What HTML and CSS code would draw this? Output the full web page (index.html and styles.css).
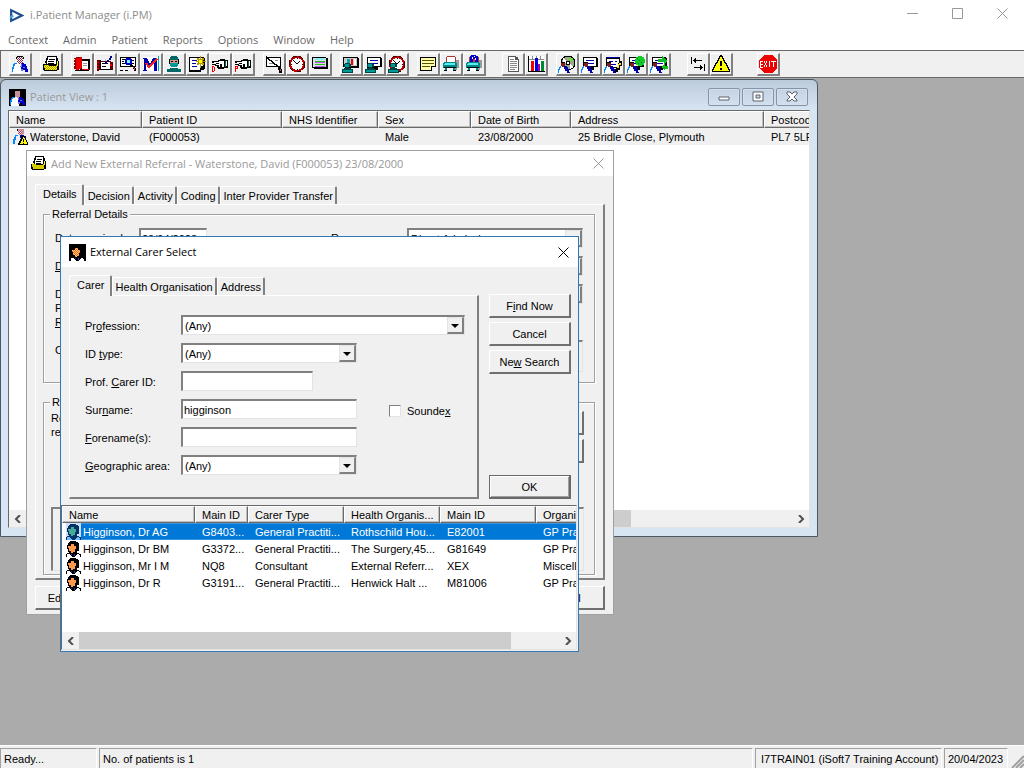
FILE: index.html
```html
<!DOCTYPE html>
<html lang="en">
<head>
    <meta charset="UTF-8" />
    <meta name="viewport" content="width=device-width, initial-scale=1.0" />
    <title>i.Patient Manager (i.PM)</title>
    <link rel="stylesheet" href="styles.css">
</head>
<body>
    <!-- Icon sheet -->
    <svg class="icon-sheet" aria-hidden="true">
        <defs>
            <pattern id="skin" width="2" height="2" patternUnits="userSpaceOnUse"><path fill="#f60" d="M0 0h2v2H0z"/><path fill="#fc9" d="M0 0h1v1H0zM1 1h1v1H1z"/></pattern>
            <pattern id="blush" width="2" height="2" patternUnits="userSpaceOnUse"><path fill="#fff" d="M0 0h2v2H0z"/><path fill="#902040" d="M0 0h1v1H0zM1 1h1v1H1z"/></pattern>
            <pattern id="gold" width="2" height="2" patternUnits="userSpaceOnUse"><path fill="#ff0" d="M0 0h2v2H0z"/><path fill="#a90" d="M0 0h1v1H0zM1 1h1v1H1z"/></pattern>
        </defs>
        <symbol id="patient" viewBox="0 0 18 18">
            <path fill="#000" d="M6 1h6v1h1v2H5V2h1z"/>
            <path fill="url(#blush)" d="M6 2h6v6h-1v1H7V8H6z"/>
            <path fill="#fff" d="M4 8h4l2 4 1 6H2v-7z"/>
            <path fill="#08f" d="M3 8h3v1H4v2H3v3H2v3H1v-5h1V9h1z"/>
            <path fill="#00c" d="M11 8h2v1h2v2h1v3h1v3h-3v-2h-2v-1h-2v-2h1z"/>
            <path fill="#77d" d="M10 9h1v3H9v-1h1zM12 12h2v1h-2zM10 14h2v2h-2z"/>
        </symbol>
        <symbol id="patient-small" viewBox="0 0 18 18">
            <path fill="#000" d="M7 0h6v1h1v2H6V1h1z"/>
            <path fill="url(#blush)" d="M7 1h6v5h-1v1H8V6H7z"/>
            <path fill="#08f" d="M4 7h3v1H5v2H4v3H3v4H1v-5h1V9h1z"/>
            <path fill="#008" d="M9 7h5v1h2v3H9z"/>
            <path fill="#000" d="M12 8h2l4 9v1H7v-1z"/>
            <path fill="#ff0" d="M13 9l4 8H9z"/><path fill="#000" d="M12 12h2v3h-2zM12 16h2v1h-2z"/>
        </symbol>
        <symbol id="folder" viewBox="0 0 18 18">
            <path fill="#000" d="M5 1h10v2h1v3h1v9h-2v1H2v-1H1V9h2V6h1V3h1z"/>
            <path fill="#fff" d="M6 2h8v7H5V5h1z"/>
            <path fill="#000" d="M7 4h6v1H7zM6 6h6v1H6zM6 8h6v1H6z"/>
            <path fill="url(#gold)" d="M2 10h4l1 1h7v-1h1v5H3v-2H2z"/>
            <path fill="#ff0" d="M15 6h1v5h-1zM3 8h1v1H3z"/>
        </symbol>
        <symbol id="redbook" viewBox="0 0 18 18">
            <path fill="#000" d="M7 4h10v11h-1v1H2v-1h5z"/>
            <path fill="#fff" d="M9 6h6v8H9z"/><path fill="#999" d="M10 8h4v1h-4zM10 10h4v1h-4z"/>
            <path fill="#800" d="M1 3h2V2h5v11H3v1H1z"/><path fill="#e00" d="M3 3h4V2h2v11l-4 2H3z"/>
            <path fill="#fff" d="M1 4h1v1H1zM1 7h1v1H1zM1 10h1v1H1z"/><path fill="#e00" d="M9 14h7v1H9z"/>
        </symbol>
        <symbol id="notebook-pen" viewBox="0 0 18 18">
            <path fill="#600" d="M1 5h3v1h11v1h2v8H3v1H1z"/><path fill="#fff" d="M4 7h10v7H4z"/>
            <path fill="#000" d="M4 5h1v10H4zM6 8h6v1H6zM6 11h4v1H6zM4 14h12v1H4z"/>
            <path fill="#e00" d="M1 7h2v1H1zM1 10h2v1H1zM1 13h2v1H1zM14 9h2v2h-2z"/>
            <path fill="#008" d="M14 1h2v2h-1v2h-2v2h-2v2H9V7h2V5h2V3h1z"/><path fill="#8cf" d="M9 4h1v2H9z"/>
        </symbol>
        <symbol id="card-find" viewBox="0 0 18 18">
            <path fill="#000" d="M1 2h16v10H1z"/><path fill="#fff" d="M2 3h14v8H2z"/>
            <path fill="#000" d="M3 4h3v1H3zM3 6h2v1H3zM3 8h3v1H3zM13 5h2v1h-2zM13 8h2v1h-2zM1 15h3v1H1zM6 15h3v1H6z"/>
            <path fill="#00c" d="M7 3h5v1h1v5h-1v1H7V9H6V4h1z"/><path fill="#6ff" d="M8 5h3v3H8z"/>
            <path fill="#000" d="M11 9h2v1h1v1h1v1h1v1h1v3h-2v-2h-1v-2h-1v-1h-2z"/><path fill="#d44" d="M14 12h1v1h1v2h-1v-2h-1z"/>
        </symbol>
        <symbol id="marker" viewBox="0 0 18 18">
            <path fill="#fff" d="M1 2h15v14H1z"/><path fill="#0aa" d="M16 1h1v15h-1z"/>
            <path fill="#00a" d="M1 3h4v1h1v2h1v2h2V6h1V4h1V3h4v13h-3V8l-3 4H7L4 8v7h1v1H1v-1h1V4H1z"/>
            <path fill="none" stroke="#e22" stroke-width="2" d="M4 8l3 4 8-8"/>
        </symbol>
        <symbol id="surgeon" viewBox="0 0 18 18">
            <path fill="#066" d="M6 1h6v1h1v3H5V2h1z"/><path fill="#c98" d="M5 5h8v3H5z"/>
            <path fill="#000" d="M6 6h2v1H6zM10 6h2v1h-2zM4 4h1v5H4zM13 4h1v5h-1z"/>
            <path fill="#099" d="M5 8h8v3h-1v1H6v-1H5z"/><path fill="#066" d="M2 14h3v-1h8v1h3v3H2z"/><path fill="#fff" d="M7 12h4v1H7z"/>
        </symbol>
        <symbol id="new-note" viewBox="0 0 18 18">
            <path fill="#000" d="M1 2h15v1h1v11h-1v1h-3v2H1z"/><path fill="#fff" d="M2 3h13v8h-3v4H2z"/>
            <path fill="#00a" d="M4 5h5v1H4zM4 8h4v1H4zM4 11h5v1H4z"/>
            <path fill="#b90" d="M12 1h1v3h1V3h2v2h-1v1h3v1h-3v1h1v2h-2V9h-1v4h-1V9h-1v1H9V8h1V7H8V6h2V5H9V3h2v1h1z"/><path fill="#ff0" d="M11 5h3v3h-3z"/>
        </symbol>
        <symbol id="hand" viewBox="0 0 18 18">
            <path fill="#000" d="M1 6h6V5h2V4h5v1h3v8h-4v1H7v-1H6v-2H4v-1H1V9h4V8H1z"/>
            <path fill="#fff" d="M3 7h5V6h5v6h-2V9H9v3H8v-2H5V9h3V8H3z"/><path fill="#066" d="M14 6h1v6h-1z"/><path fill="#fff" d="M15 6h1v5h-1z"/>
        </symbol>
        <symbol id="hand-d" viewBox="0 0 18 18"><use href="#hand"/><path fill="#e00" d="M1 11h2v1h1v4H3v1H1zM2 12v4h1v-4z" fill-rule="evenodd"/></symbol>
        <symbol id="hand-p" viewBox="0 0 18 18"><use href="#hand"/><path fill="#e00" d="M1 11h3v3H2v3H1zM2 12v1h1v-1z" fill-rule="evenodd"/></symbol>
        <symbol id="no-letter" viewBox="0 0 18 18">
            <path fill="#000" d="M1 2h15v10H1z"/><path fill="#fff" d="M2 3h13v8H2z"/><path fill="#888" d="M4 5h2v1H4zM4 8h4v1H4zM10 5h3v1h-3z"/>
            <path fill="none" stroke="#000" stroke-width="1.500" d="M1 2l14 11"/><path fill="#000" d="M13 12h3v2h1v4h-3v-3h-1z"/><path fill="#c44" d="M15 14h1v2h-1z"/>
        </symbol>
        <symbol id="clock" viewBox="0 0 18 18">
            <circle cx="9" cy="9" r="7" fill="#fff" stroke="#b00" stroke-width="2"/><circle cx="9" cy="9" r="8" fill="none" stroke="#400" stroke-width="1" stroke-dasharray="5 3"/>
            <path fill="none" stroke="#000" d="M5 5l4 4 3-3"/><path fill="#000" d="M9 3h1v1H9zM9 14h1v1H9zM3 9h1v1H3zM14 9h1v1h-1z"/>
        </symbol>
        <symbol id="listing" viewBox="0 0 18 18">
            <path fill="#000" d="M1 2h14v1h2v11H3v-1H1z"/><path fill="#ddd" d="M2 3h13v9H2z"/><path fill="#8ee" d="M4 3h10v2H4z"/><path fill="#2b2" d="M4 6h10v1H4zM4 9h10v1H4z"/><path fill="#b5f" d="M4 7h10v1H4zM4 11h10v1H4z"/>
        </symbol>
        <symbol id="nurse" viewBox="0 0 18 18">
            <path fill="#044" d="M3 8h5v1h1v3H7v1h2v1h2v4H0v-4h2v-1h2v-1H2V9h1z"/><path fill="#099" d="M3 9h4v3H3zM1 15h9v2H1z"/>
        </symbol>
        <symbol id="nurse-chart" viewBox="0 0 18 18">
            <path fill="#000" d="M1 2h15v1h1v10H3v-1H1z"/><path fill="#ccc" d="M2 3h13v8H2z"/><path fill="#0aa" d="M5 4h3v6H5z"/><path fill="#e00" d="M9 4h2v6H9z"/><path fill="#fff" d="M12 4h2v6h-2z"/><use href="#nurse"/>
        </symbol>
        <symbol id="card" viewBox="0 0 18 18">
            <path fill="#000" d="M2 2h14v1h1v9h-4v3H2z"/><path fill="#fff" d="M3 3h12v8H3z"/><path fill="#00a" d="M5 5h8v1H5zM5 8h8v1H5z"/>
        </symbol>
        <symbol id="nurse-card" viewBox="0 0 18 18"><use href="#card"/><use href="#nurse"/></symbol>
        <symbol id="nurse-clock" viewBox="0 0 18 18"><use href="#clock"/><use href="#nurse"/></symbol>
        <symbol id="sticky" viewBox="0 0 18 18">
            <path fill="#000" d="M1 2h16v10h-4v4H1z"/><path fill="#ffa" d="M2 3h14v8h-4v4H2z"/><path fill="#550" d="M3 5h12v1H3zM3 8h12v1H3zM3 11h8v1H3z"/>
        </symbol>
        <symbol id="printer" viewBox="0 0 18 18">
            <path fill="#999" d="M10 5h7v8h-2v2h-4z"/><path fill="#fff" d="M5 2h8v5H4V4h1z"/><path fill="#a33" d="M5 1h8v1H5zM4 2h1v5H4zM13 2h1v5h-1z"/>
            <path fill="#088" d="M2 7h12v1h1v5h-2v3h-2v-3H5v3H3v-3H1V8h1z"/><path fill="#5ee" d="M3 8h10v2H2V9h1z"/><path fill="#fff" d="M5 13h6v3H5z"/><path fill="#000" d="M2 12h12v1H2zM2 15h3v1H2zM11 15h3v1h-3z"/>
        </symbol>
        <symbol id="print-all" viewBox="0 0 18 18"><use href="#printer"/><path fill="#00c" d="M6 0h5v1h2v6H5V1h1z"/><path fill="#fff" d="M7 2h1v2H7zM9 1h1v1H9zM10 3h1v2h-1z"/><path fill="#c33" d="M8 4h2v3H8z"/></symbol>
        <symbol id="page" viewBox="0 0 18 18">
            <path fill="#555" d="M4 1h8v1h2v2h1v13H4z"/><path fill="#fff" d="M5 2h6v3h3v11H5z"/><path fill="#888" d="M6 4h4v1H6zM6 6h7v1H6zM6 8h7v1H6zM6 10h7v1H6zM6 12h7v1H6zM6 14h5v1H6z"/>
        </symbol>
        <symbol id="chart" viewBox="0 0 18 18">
            <path fill="#fff" d="M2 1h15v15H2z"/><path fill="#888" d="M5 1h1v4H5zM9 1h1v3H9zM13 1h1v3h-1zM2 4h15v1H2z"/><path fill="#000" d="M1 1h1v15h16v1H1z"/>
            <path fill="#e00" d="M4 6h3v10H4z"/><path fill="#00d" d="M8 3h3v13H8z"/><path fill="#a0a" d="M11 9h2v7h-2z"/><path fill="#083" d="M14 6h3v10h-3z"/>
        </symbol>
        <symbol id="doc" viewBox="0 0 18 18">
            <path fill="#fff" d="M2 11h5v7H1v-4h1z"/><path fill="#08f" d="M2 11h1v2H2v2H1v3H0v-4h1v-2h1z"/><path fill="#00a" d="M6 11h3v1h1v2h1v3h1v1H9v-2H7v-2H6z"/><path fill="#802020" d="M3 8h4v3H6v1H4v-1H3z"/><path fill="#000" d="M3 7h4v1H3z"/>
        </symbol>
        <symbol id="doc-cd" viewBox="0 0 18 18">
            <circle cx="10" cy="8" r="7" fill="#9a8" stroke="#000"/><path fill="#fff" d="M5 3l4 4-4 3zM12 9l4 3-4 2z"/><path fill="#6d3" d="M11 3h4v3h-3z"/><circle cx="10" cy="8" r="2" fill="#fff" stroke="#000"/><use href="#doc"/>
        </symbol>
        <symbol id="doc-card" viewBox="0 0 18 18"><use href="#card"/><use href="#doc"/></symbol>
        <symbol id="doc-edit" viewBox="0 0 18 18">
            <path fill="#000" d="M2 2h14v11H2z"/><path fill="#fff" d="M3 4h12v8H3z"/><path fill="#00a" d="M3 2h12v1H3zM5 6h4v1H5zM11 6h2v1h-2zM5 9h7v1H5z"/>
            <path fill="#000" d="M15 6h3v5h-2v4h-2v2h-3v-3h1v-2h2V8h1z"/><path fill="#fd3" d="M15 8h2v2h-2v3h-2v-2h1V9h1z"/><use href="#doc"/>
        </symbol>
        <symbol id="doc-globe" viewBox="0 0 18 18"><use href="#card"/><circle cx="13" cy="6" r="5" fill="#1c2"/><path fill="#063" d="M10 3h1v1h-1zM12 5h1v1h-1zM14 7h1v1h-1zM11 8h1v1h-1z"/><use href="#doc"/></symbol>
        <symbol id="doc-swap" viewBox="0 0 18 18"><use href="#card"/><path fill="#1b2" d="M8 4h4V1l6 5-4 3V7H8zM18 11v3h-3v2l-4-4 4-3v2z"/><use href="#doc"/></symbol>
        <symbol id="arrows" viewBox="0 0 18 18">
            <path fill="#000" d="M2 2h1v7H2zM4 5h1V4h1V3h1v2h6v1H7v2H6V7H5V6H4zM15 9h1v7h-1zM14 12h-1v-1h-1v-1h-1v2H5v1h6v2h1v-1h1v-1h1z"/>
        </symbol>
        <symbol id="warning" viewBox="0 0 18 18">
            <path fill="#000" d="M8 0h2l8 15v2H0v-2z"/><path fill="#ff0" d="M9 1l8 15H1z"/><path fill="#000" d="M8 6h2v5H8zM8 13h2v2H8z"/>
        </symbol>
        <symbol id="exit" viewBox="0 0 18 18">
            <path fill="#e00" d="M5 0h8l5 5v8l-5 5H5l-5-5V5z"/>
            <path fill="none" stroke="#fff" d="M4 6H1.500v6H4M2 9h2M5 6l3 6M8 6l-3 6M10.500 6v6M12 6.500h5M14.500 6v6"/>
        </symbol>
        <symbol id="carer" viewBox="0 0 15 17">
            <path fill="#000" d="M4 1h6v1h2v1h1v8h-2v2h2v1h2v3H0v-3h1v-1h2v-1H2V9H1V5h1V3h1V2h1z"/>
            <path fill="url(#skin)" d="M5 4h3v2h2v3H9v3H7v1H5v-2H3V8H2V6h3z"/>
            <path fill="#fff" d="M1 14h3v1h1v1h1v1H1zM11 14h2v1h1v2H9v-1h1v-1h1z"/><path fill="#33c" d="M5 14h1v1H5zM8 14h1v2H8z"/>
        </symbol>
        <symbol id="carer-on" viewBox="0 0 15 17">
            <path fill="#cdf" d="M0 0h15v17H0z"/>
            <path fill="#036" d="M4 1h6v1h2v1h1v8h-2v2h2v1h2v3H0v-3h1v-1h2v-1H2V9H1V5h1V3h1V2h1z"/>
            <path fill="#4a9" d="M5 4h3v2h2v3H9v3H7v1H5v-2H3V8H2V6h3z"/>
            <path fill="#7bf" d="M1 14h3v1h1v1h1v1H1zM11 14h2v1h1v2H9v-1h1v-1h1z"/>
        </symbol>
    </svg>

    <header class="app-title">
        <svg class="app-logo" viewBox="0 0 14 14"><path d="M2 2v10l10-5z" fill="none" stroke="#1c4f8c" stroke-width="2"/><path d="M1 9l3-2" stroke="#4aa3dc" stroke-width="2"/></svg>
        <h1>i.Patient Manager (i.PM)</h1>
        <button class="caption" aria-label="Minimise"><svg viewBox="0 0 11 11"><path d="M0 5.500h11"/></svg></button>
        <button class="caption" aria-label="Maximise"><svg viewBox="0 0 11 11"><path d="M.5.5h10v10H.5z"/></svg></button>
        <button class="caption" aria-label="Close"><svg viewBox="0 0 11 11"><path d="M.5.5l10 10M10.500.5l-10 10"/></svg></button>
    </header>

    <nav class="menu">
        <a href="#">Context</a><a href="#">Admin</a><a href="#">Patient</a><a href="#">Reports</a><a href="#">Options</a><a href="#">Window</a><a href="#">Help</a>
    </nav>

    <div class="toolbar">
        <div class="tools"><button aria-label="Patient"><svg><use href="#patient"/></svg></button></div>
        <div class="tools"><button aria-label="Referral"><svg><use href="#folder"/></svg></button></div>
        <div class="tools">
            <button aria-label="Case notes"><svg><use href="#redbook"/></svg></button>
            <button aria-label="Edit notes"><svg><use href="#notebook-pen"/></svg></button>
            <button aria-label="Find card"><svg><use href="#card-find"/></svg></button>
            <button aria-label="Marker"><svg><use href="#marker"/></svg></button>
            <button aria-label="Theatre"><svg><use href="#surgeon"/></svg></button>
            <button aria-label="New note"><svg><use href="#new-note"/></svg></button>
            <button aria-label="Discharge"><svg><use href="#hand-d"/></svg></button>
            <button aria-label="Pre-admit"><svg><use href="#hand-p"/></svg></button>
        </div>
        <div class="tools">
            <button aria-label="Remove letter"><svg><use href="#no-letter"/></svg></button>
            <button aria-label="Clock"><svg><use href="#clock"/></svg></button>
            <button aria-label="Listing"><svg><use href="#listing"/></svg></button>
        </div>
        <div class="tools">
            <button aria-label="Clinic chart"><svg><use href="#nurse-chart"/></svg></button>
            <button aria-label="Clinic card"><svg><use href="#nurse-card"/></svg></button>
            <button aria-label="Clinic time"><svg><use href="#nurse-clock"/></svg></button>
        </div>
        <div class="tools">
            <button aria-label="Note"><svg><use href="#sticky"/></svg></button>
            <button aria-label="Print"><svg><use href="#printer"/></svg></button>
            <button aria-label="Print all"><svg><use href="#print-all"/></svg></button>
        </div>
        <div class="tools wide">
            <button aria-label="Document"><svg><use href="#page"/></svg></button>
            <button aria-label="Chart"><svg><use href="#chart"/></svg></button>
        </div>
        <div class="tools">
            <button aria-label="Disc"><svg><use href="#doc-cd"/></svg></button>
            <button aria-label="Patient card"><svg><use href="#doc-card"/></svg></button>
            <button aria-label="Edit card"><svg><use href="#doc-edit"/></svg></button>
            <button aria-label="Globe"><svg><use href="#doc-globe"/></svg></button>
            <button aria-label="Transfer"><svg><use href="#doc-swap"/></svg></button>
        </div>
        <div class="tools wide">
            <button aria-label="Switch"><svg><use href="#arrows"/></svg></button>
            <button aria-label="Alert"><svg><use href="#warning"/></svg></button>
        </div>
        <div class="tools widest"><button aria-label="Exit"><svg><use href="#exit"/></svg></button></div>
    </div>

    <main class="desktop">
        <!-- Patient View -->
        <section class="window patient-view">
            <header class="glass-title">
                <svg class="title-icon dark"><use href="#patient"/></svg>
                <h2>Patient View : 1</h2>
                <button aria-label="Minimise"><svg viewBox="0 0 14 12"><path d="M2 6h10v3H2z"/></svg></button>
                <button aria-label="Restore"><svg viewBox="0 0 14 12"><path d="M2 1h10v9H2zM5 4v3h4V4z" fill-rule="evenodd"/></svg></button>
                <button aria-label="Close"><svg viewBox="0 0 14 12"><path d="M2 1h3l2 2 2-2h3v2L9 6l3 3v1H9L7 8l-2 2H2V9l3-3-3-3z"/></svg></button>
            </header>
            <div class="list">
                <div class="list-rows">
                    <table>
                        <colgroup><col class="c-icon"><col class="p-name"><col class="p-id"><col class="p-nhs"><col class="p-sex"><col class="p-dob"><col class="p-address"><col class="p-post"></colgroup>
                        <thead>
                            <tr><th colspan="2">Name</th><th>Patient ID</th><th>NHS Identifier</th><th>Sex</th><th>Date of Birth</th><th>Address</th><th>Postcode</th></tr>
                        </thead>
                        <tbody>
                            <tr class="shaded"><td class="icon-cell"><svg><use href="#patient-small"/></svg></td><td class="first">Waterstone, David</td><td>(F000053)</td><td></td><td>Male</td><td>23/08/2000</td><td>25 Bridle Close, Plymouth</td><td>PL7 5LR</td></tr>
                        </tbody>
                    </table>
                </div>
                <div class="scrollbar">
                    <button aria-label="Scroll left"><svg viewBox="0 0 8 8"><path d="M6 0L2 4l4 4"/></svg></button>
                    <div class="track"><div class="thumb patient-thumb"></div></div>
                    <button aria-label="Scroll right"><svg viewBox="0 0 8 8"><path d="M2 0l4 4-4 4"/></svg></button>
                </div>
            </div>
        </section>

        <!-- Referral dialog -->
        <section class="window referral">
            <header class="dialog-title">
                <svg class="title-icon"><use href="#folder"/></svg>
                <h2>Add New External Referral - Waterstone, David (F000053) 23/08/2000</h2>
                <button aria-label="Close"><svg viewBox="0 0 11 11"><path d="M.5.5l10 10M10.500.5l-10 10"/></svg></button>
            </header>
            <div class="referral-body">
                <div class="tabs"><button class="selected">Details</button><button>Decision</button><button>Activity</button><button>Coding</button><button>Inter Provider Transfer</button></div>
                <div class="panel referral-panel">
                    <fieldset class="details">
                        <legend>Referral Details</legend>
                        <label for="received">Date received:</label>
                        <input id="received" type="text" value="20/04/2023">
                        <label for="reason">Reason:</label>
                        <span class="select"><select id="reason"><option>Direct Admission</option></select><i class="arrow"></i></span>
                        <label for="decided"><u>D</u>ate:</label>
                        <input id="decided" type="text">
                        <label for="source">Source:</label>
                        <span class="select"><select id="source"><option></option></select><i class="arrow"></i></span>
                        <label for="priority">Date<br>Priority:</label>
                        <input id="priority" type="text">
                        <label for="urgency">Urgency:</label>
                        <span class="select"><select id="urgency"><option></option></select><i class="arrow"></i></span>
                        <label for="reference" class="ref-label"><u>R</u>ef:</label>
                        <input id="reference" type="text">
                        <label for="comment" class="comment-label">Comment:</label>
                        <textarea id="comment" readonly></textarea>
                    </fieldset>
                    <fieldset class="referrer">
                        <legend>Referrer</legend>
                        <p>Record<br>referrer</p>
                        <div class="side-buttons"><button class="btn">Find</button><button class="btn">Clear</button></div>
                        <div class="blank-list"></div>
                    </fieldset>
                </div>
                <footer><button class="btn">Edit Details</button><button class="btn cancel">Cancel</button></footer>
            </div>
        </section>

        <!-- Carer search dialog -->
        <section class="window carer-select">
            <header class="dialog-title active">
                <svg class="title-icon dark"><use href="#carer"/></svg>
                <h2>External Carer Select</h2>
                <button aria-label="Close"><svg viewBox="0 0 11 11"><path d="M.5.5l10 10M10.500.5l-10 10"/></svg></button>
            </header>
            <form class="search">
                <div class="criteria">
                    <div class="tabs"><button type="button" class="selected">Carer</button><button type="button">Health Organisation</button><button type="button">Address</button></div>
                    <div class="panel fields">
                        <label for="profession">Pr<u>o</u>fession:</label>
                        <span class="select full"><select id="profession"><option>(Any)</option></select><i class="arrow"></i></span>
                        <label for="idtype">ID <u>t</u>ype:</label>
                        <span class="select"><select id="idtype"><option>(Any)</option></select><i class="arrow"></i></span>
                        <label for="carerid">Prof. <u>C</u>arer ID:</label>
                        <input id="carerid" class="short" type="text">
                        <label for="surname">Sur<u>n</u>ame:</label>
                        <input id="surname" type="text" value="higginson">
                        <label class="check"><input type="checkbox"><span>Sounde<u>x</u></span></label>
                        <label for="forename"><u>F</u>orename(s):</label>
                        <input id="forename" type="text">
                        <label for="area"><u>G</u>eographic area:</label>
                        <span class="select"><select id="area"><option>(Any)</option></select><i class="arrow"></i></span>
                    </div>
                </div>
                <div class="actions">
                    <button type="button" class="btn">F<u>i</u>nd Now</button>
                    <button type="button" class="btn">Cancel</button>
                    <button type="button" class="btn">Ne<u>w</u> Search</button>
                    <button type="button" class="btn default">OK</button>
                </div>
            </form>
            <div class="list">
                <div class="list-rows">
                    <table>
                        <colgroup><col class="c-icon"><col class="r-name"><col class="r-id"><col class="r-wide"><col class="r-wide"><col class="r-wide"><col class="r-wide"></colgroup>
                        <thead>
                            <tr><th colspan="2">Name</th><th>Main ID</th><th>Carer Type</th><th>Health Organis...</th><th>Main ID</th><th>Organisation</th></tr>
                        </thead>
                        <tbody>
                            <tr class="selected"><td class="icon-cell"><svg><use href="#carer-on"/></svg></td><td class="first">Higginson, Dr AG</td><td>G8403...</td><td>General Practiti...</td><td>Rothschild Hou...</td><td>E82001</td><td>GP Practice</td></tr>
                            <tr><td class="icon-cell"><svg><use href="#carer"/></svg></td><td class="first">Higginson, Dr BM</td><td>G3372...</td><td>General Practiti...</td><td>The Surgery,45...</td><td>G81649</td><td>GP Practice</td></tr>
                            <tr><td class="icon-cell"><svg><use href="#carer"/></svg></td><td class="first">Higginson, Mr I M</td><td>NQ8</td><td>Consultant</td><td>External Referr...</td><td>XEX</td><td>Miscellaneous</td></tr>
                            <tr><td class="icon-cell"><svg><use href="#carer"/></svg></td><td class="first">Higginson, Dr R</td><td>G3191...</td><td>General Practiti...</td><td>Henwick Halt ...</td><td>M81006</td><td>GP Practice</td></tr>
                        </tbody>
                    </table>
                </div>
                <div class="scrollbar">
                    <button aria-label="Scroll left"><svg viewBox="0 0 8 8"><path d="M6 0L2 4l4 4"/></svg></button>
                    <div class="track"><div class="thumb carer-thumb"></div></div>
                    <button aria-label="Scroll right"><svg viewBox="0 0 8 8"><path d="M2 0l4 4-4 4"/></svg></button>
                </div>
            </div>
        </section>
    </main>

    <footer class="status">
        <span class="state">Ready...</span>
        <span class="message">No. of patients is 1</span>
        <span class="account">I7TRAIN01 (iSoft7 Training Account)</span>
        <span class="date">20/04/2023</span>
        <svg class="grip" viewBox="0 0 14 14"><path d="M2 14L14 2M6 14l8-8M10 14l4-4" stroke="#a0a0a0" stroke-width="2"/></svg>
    </footer>
</body>
</html>
```
FILE: styles.css
```css
/* General */
* {
    box-sizing: border-box;
}

body {
    margin: 0;
    height: 100vh;
    display: flex;
    flex-direction: column;
    overflow: hidden;
    background: #fff;
    color: #000;
    font: 11px/14px "Liberation Sans", Arial, sans-serif;
}

button, input, select, textarea {
    font: inherit;
    color: inherit;
    margin: 0;
    padding: 0;
    border: 0;
    border-radius: 0;
    background: none;
}

h1, h2, p {
    margin: 0;
    font-weight: normal;
}

h1, h2, .menu {
    font: 11px/16px "Open Sans", "Noto Sans", sans-serif;
}

.icon-sheet {
    position: absolute;
    width: 0;
    height: 0;
}

symbol {
    shape-rendering: crispEdges;
}

/* Application title and menu */
.app-title {
    display: flex;
    align-items: center;
    height: 30px;
    padding-left: 9px;
    color: #8c8c8c;
}

.app-logo {
    width: 15px;
    height: 15px;
    margin-right: 6px;
}

.app-title h1 {
    flex: 1;
}

.caption {
    width: 46px;
    height: 30px;
    margin-right: -1px;
}

.caption svg, .dialog-title button svg {
    width: 11px;
    height: 11px;
    fill: none;
    stroke: #999;
}

.menu {
    display: flex;
    gap: 15px;
    height: 20px;
    padding: 2px 8px;
}

.menu a {
    color: #6a6a6a;
    text-decoration: none;
}

/* Toolbar */
.toolbar {
    display: flex;
    gap: 8px;
    height: 28px;
    padding: 2px 8px;
    background: #f0f0f0;
    border: 1px solid #696969;
    border-width: 1px 0 1px 1px;
}

.tools {
    display: flex;
}

.tools.wide {
    margin-left: 8px;
}

.tools.widest {
    margin-left: 16px;
}

.tools button {
    width: 23px;
    height: 23px;
    border: solid;
    border-width: 1px 2px 2px 1px;
    border-color: #fff #808080 #808080 #fff;
}

.tools svg {
    display: block;
    width: 18px;
    height: 18px;
    margin: 1px;
}

/* Desktop and windows */
.desktop {
    position: relative;
    flex: 1;
    overflow: hidden;
    background: #ababab;
}

.window {
    position: absolute;
    display: flex;
    flex-direction: column;
    background: #f0f0f0;
    border: 1px solid #a0a0a0;
}

.patient-view {
    left: 0;
    top: 1px;
    width: 818px;
    height: 458px;
    padding: 0 7px 8px;
    background: linear-gradient(#bccbdb, #d7e4f2 30px);
    border-color: #4d5866;
    border-radius: 6px 6px 0 0;
}

.referral {
    left: 26px;
    top: 72px;
    width: 588px;
    height: 465px;
}

.carer-select {
    left: 60px;
    top: 158px;
    width: 519px;
    height: 416px;
    border-color: #3079b4;
}

.title-icon {
    width: 17px;
    height: 17px;
    margin-right: 4px;
}

.title-icon.dark {
    background: #000;
}

.glass-title, .dialog-title {
    display: flex;
    align-items: center;
    color: #999;
}

.glass-title {
    height: 30px;
    padding: 4px 0 0 1px;
}

.glass-title h2, .dialog-title h2 {
    flex: 1;
}

.glass-title button {
    display: flex;
    align-items: center;
    justify-content: center;
    width: 32px;
    height: 18px;
    margin-right: 2px;
    border: 1px solid #8494aa;
    border-radius: 2px;
    box-shadow: inset 0 0 0 1px #d5e0ec;
}

.glass-title svg:not(.title-icon) {
    width: 14px;
    height: 12px;
    fill: #fff;
    stroke: #5a626e;
}

.dialog-title {
    height: 25px;
    padding: 0 9px 0 3px;
    background: #fff;
}

.dialog-title button {
    display: flex;
    padding: 0;
}

.dialog-title.active {
    height: 30px;
    padding-left: 8px;
    color: #000;
}

.dialog-title.active button svg {
    stroke: #000;
}

/* Tabs */
.tabs {
    display: flex;
    align-items: flex-end;
    position: relative;
}

.tabs button {
    height: 18px;
    padding: 0 2px 0 3px;
    border: solid;
    border-width: 1px 2px 0 1px;
    border-color: #fff #808080 #fff #fff;
    border-radius: 2px 2px 0 0;
}

.tabs .selected {
    height: 21px;
    margin-bottom: -1px;
    padding: 0 5px 3px 7px;
    background: #f0f0f0;
}

.panel {
    border: solid;
    border-width: 1px 2px 2px 1px;
    border-color: #fff #808080 #808080 #fff;
}

/* Inputs and buttons */
input[type="text"], .select, textarea, .blank-list {
    width: 176px;
    height: 20px;
    background: #fff;
    border: solid;
    border-width: 2px 1px 1px 2px;
    border-color: #808080 #e3e3e3 #e3e3e3 #808080;
}

input[type="text"] {
    padding-left: 1px;
}

input.short {
    width: 132px;
}

.select {
    position: relative;
    display: block;
}

.select select {
    width: 100%;
    height: 100%;
    padding-left: 2px;
    appearance: none;
}

.select.full {
    width: 284px;
    grid-column: 2 / 4;
}

.arrow {
    position: absolute;
    right: 0;
    top: 0;
    width: 17px;
    height: 17px;
    pointer-events: none;
    background: #f0f0f0;
    border: solid;
    border-width: 1px 2px 2px 1px;
    border-color: #e3e3e3 #808080 #808080 #e3e3e3;
}

.arrow::after {
    content: "";
    display: block;
    margin: 6px 0 0 3px;
    width: 0;
    border: 4px solid transparent;
    border-top-color: #000;
    border-bottom: 0;
}

.btn {
    width: 82px;
    height: 24px;
    background: #f0f0f0;
    border: solid;
    border-width: 1px 2px 2px 1px;
    border-color: #fff #707070 #707070 #fff;
}

.btn.default {
    border-color: #696969;
    box-shadow: inset 1px 1px #fff, inset -1px -1px #a0a0a0;
}

fieldset {
    margin: 0;
    padding: 0;
    border: 1px solid #a0a0a0;
    box-shadow: 1px 1px #fff, inset 1px 1px #fff;
}

legend {
    padding: 0 2px;
    background: #f0f0f0;
}

/* Referral dialog */
.referral-body {
    flex: 1;
    display: flex;
    flex-direction: column;
    padding: 8px 8px 4px;
}

.referral-panel {
    flex: 1;
    padding: 2px 8px 0 7px;
}

.details {
    display: grid;
    grid-template-columns: 84px 192px 76px 176px;
    grid-auto-rows: 28px;
    height: 176px;
    padding: 7px 0 0 11px;
}

.details legend {
    margin-left: -5px;
}

.details label {
    padding-top: 3px;
}

.details input[type="text"] {
    width: 68px;
}

.ref-label, .comment-label {
    grid-column: 1;
}

.details textarea {
    grid-column: 2 / 5;
    width: auto;
    height: 32px;
    resize: none;
    background: #f0f0f0;
}

.referrer {
    display: grid;
    grid-template-columns: 1fr 82px;
    height: 180px;
    margin-top: 12px;
    padding: 2px 10px 3px 7px;
}

.referrer legend {
    margin-left: -1px;
}

.side-buttons {
    display: flex;
    flex-direction: column;
    gap: 4px;
}

.blank-list {
    grid-column: 1 / 3;
    align-self: end;
    width: auto;
    height: 64px;
    background: #f0f0f0;
}

.referral-body footer {
    display: flex;
    justify-content: space-between;
    margin-top: 6px;
}

.btn.cancel {
    text-align: center;
}

/* Carer search dialog */
.search {
    display: flex;
    gap: 10px;
    padding: 8px 7px 6px 8px;
}

.criteria {
    flex: 1;
}

.fields {
    display: grid;
    grid-template-columns: 96px 208px 1fr;
    grid-auto-rows: 28px;
    height: 204px;
    padding: 19px 0 0 15px;
}

.fields > label:not(.check) {
    grid-column: 1;
    padding-top: 4px;
}

.check {
    display: flex;
    align-items: center;
    gap: 6px;
    height: 24px;
}

.check input {
    appearance: none;
    width: 12px;
    height: 12px;
    background: #fff;
    border: 1px solid #e3e3e3;
    border-top-color: #808080;
    border-left-color: #808080;
}

.actions {
    display: flex;
    flex-direction: column;
    gap: 4px;
    padding-top: 19px;
}

.actions .default {
    margin-top: auto;
}

/* Lists */
.list {
    flex: 1;
    display: flex;
    flex-direction: column;
    min-height: 0;
    background: #fff;
    border: 1px solid #e3e3e3;
    border-top-color: #696969;
    border-left-color: #696969;
}

.carer-select .list {
    margin: 0 1px 1px 0;
}

.list-rows {
    flex: 1;
    overflow: hidden;
}

table {
    table-layout: fixed;
    width: 0;
    border-spacing: 0;
}

th, td {
    height: 17px;
    padding: 0 0 0 7px;
    line-height: 14px;
    text-align: left;
    font-weight: normal;
    white-space: nowrap;
}

th {
    padding-left: 6px;
    background: #f0f0f0;
    border: 1px solid #696969;
    border-top-color: #fff;
    border-left-color: #fff;
    box-shadow: inset -1px -1px #c0c0c0;
}

td.first {
    padding-left: 2px;
}

td.icon-cell {
    padding: 0 0 0 3px;
    background: #fff;
}

.icon-cell svg {
    display: block;
    width: 16px;
    height: 17px;
}

.c-icon { width: 19px; }
.p-name { width: 114px; }
.p-id { width: 140px; }
.p-nhs { width: 96px; }
.p-sex { width: 93px; }
.p-dob { width: 100px; }
.p-address { width: 193px; }
.p-post { width: 96px; }
.r-name { width: 114px; }
.r-id { width: 53px; }
.r-wide { width: 96px; }

tr.shaded td {
    background: #f0f0f0;
}

tr.selected td:not(.icon-cell) {
    color: #fff;
    background: #0078d7;
    box-shadow: inset 0 1px #3a94dc, inset 0 -1px #3a94dc;
}

.scrollbar {
    display: flex;
    height: 17px;
    background: #f0f0f0;
}

.scrollbar button {
    display: flex;
    align-items: center;
    justify-content: center;
    width: 17px;
}

.scrollbar svg {
    width: 8px;
    height: 8px;
    fill: none;
    stroke: #505050;
    stroke-width: 2;
}

.track {
    flex: 1;
}

.thumb {
    height: 100%;
    background: #cdcdcd;
}

.patient-thumb { width: 79%; }
.carer-thumb { width: 90%; }

/* Status bar */
.status {
    display: flex;
    gap: 2px;
    height: 23px;
    padding-top: 2px;
    background: #f0f0f0;
    border-top: 1px solid #fff;
}

.status span {
    padding: 3px 0 0 3px;
    border: solid;
    border-width: 1px 1px 0 1px;
    border-color: #a0a0a0 #fff #fff #a0a0a0;
}

.state { width: 97px; }
.message { flex: 1; }
.account { width: 187px; }
.date { width: 64px; }

.status .account {
    padding-left: 5px;
}

.grip {
    width: 14px;
    height: 14px;
    align-self: flex-end;
}
```
